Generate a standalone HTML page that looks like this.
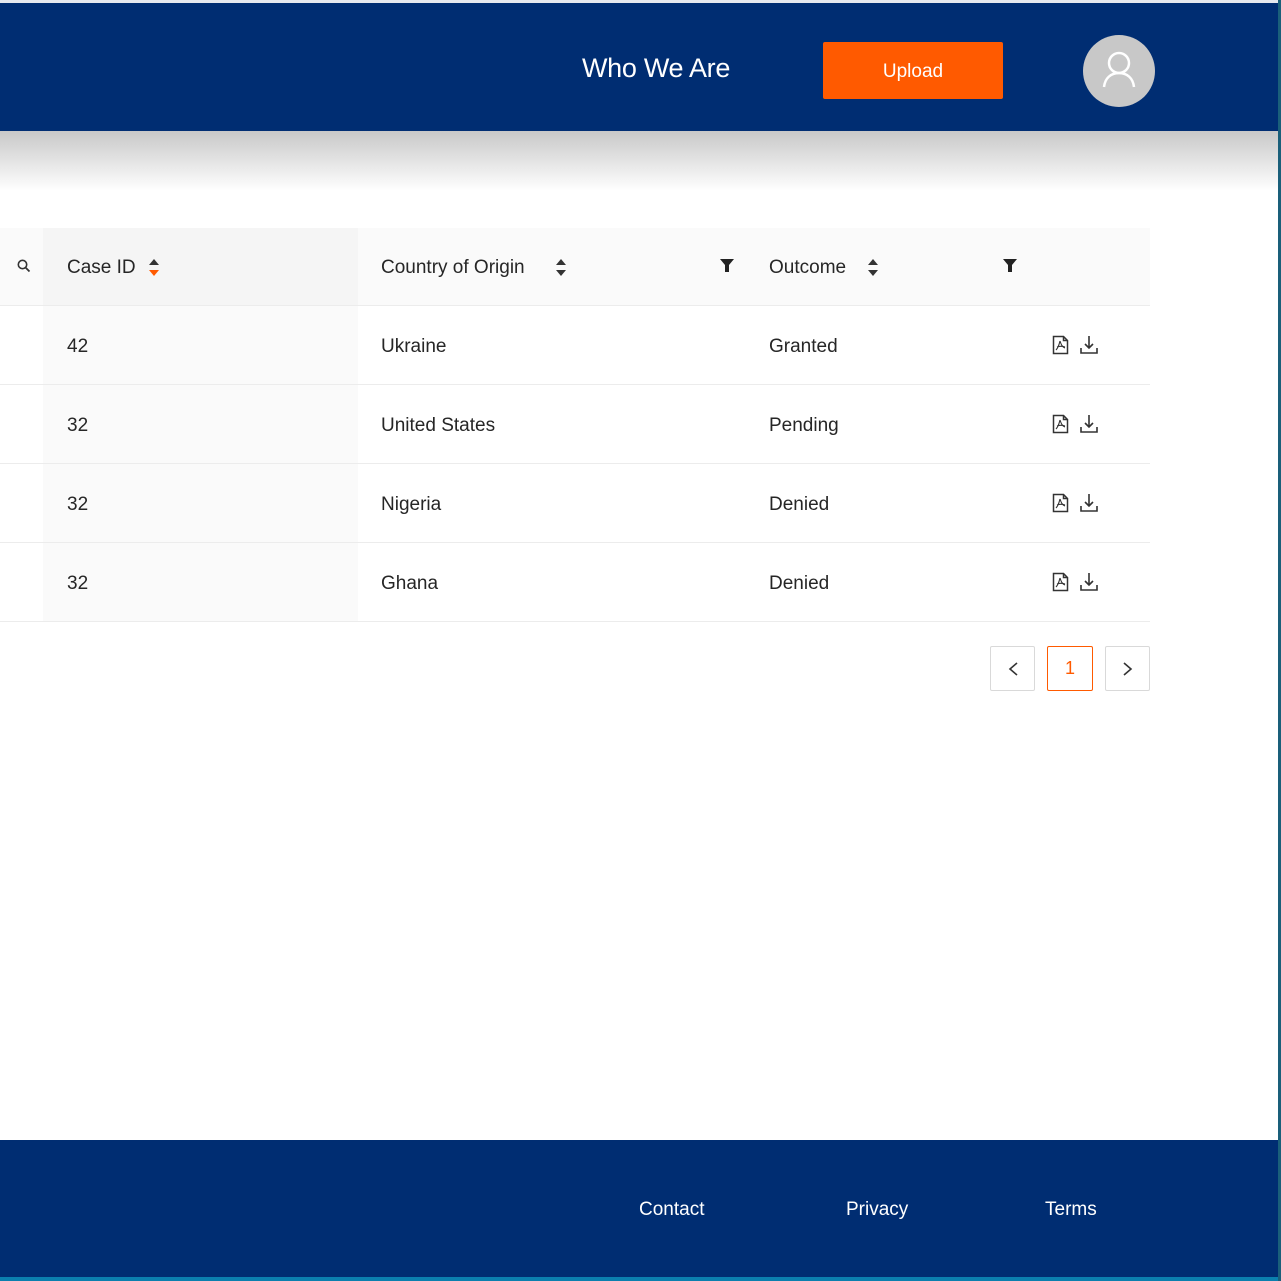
<!DOCTYPE html>
<html><head><meta charset="utf-8"><style>
*{margin:0;padding:0;box-sizing:border-box}
body{width:1281px;height:1281px;position:relative;overflow:hidden;background:#fff;font-family:"Liberation Sans",sans-serif;color:#262626}
.a{position:absolute}
.hdr{left:0;top:3px;width:1278px;height:128px;background:#002d72}
.shadow{left:0;top:131px;width:1278px;height:60px;background:linear-gradient(#c8c8c8,rgba(255,255,255,0))}
.t{font-size:19px;white-space:nowrap}
.hl{left:0;width:1150px;height:1px;background:#ececec}
</style></head><body>
<div class="a" style="left:0;top:0;width:1281px;height:3px;background:#e6e9ef"></div>
<div class="a hdr"></div>
<div class="a shadow"></div>
<div class="a" style="left:582px;top:53px;color:#fff;font-size:27px;letter-spacing:-0.3px">Who We Are</div>
<div class="a" style="left:823px;top:42px;width:180px;height:57px;background:#ff5a00;border-radius:2px;color:#fff;font-size:19px;text-align:center;line-height:59px">Upload</div>
<div class="a" style="left:1083px;top:35px;width:72px;height:72px;border-radius:50%;background:#c8c8c8">
<svg width="72" height="72" viewBox="0 0 72 72"><circle cx="36" cy="28" r="10" fill="none" stroke="#fff" stroke-width="2.5"/><path d="M21 52c1-9 7-14 15-14s14 5 15 14" fill="none" stroke="#fff" stroke-width="2.5"/></svg></div>

<div class="a" style="left:0;top:228px;width:1150px;height:78px;background:#fafafa"></div>
<div class="a" style="left:43px;top:228px;width:315px;height:394px;background:#f5f5f5"></div>
<div class="a" style="left:43px;top:306px;width:315px;height:316px;background:#fafafa"></div>
<div class="a hl" style="top:305px"></div>
<div class="a hl" style="top:384px"></div>
<div class="a hl" style="top:463px"></div>
<div class="a hl" style="top:542px"></div>
<div class="a hl" style="top:621px"></div>
<svg class="a" style="left:16px;top:258px" width="16" height="16" viewBox="0 0 16 16"><circle cx="6.5" cy="6.5" r="4.2" fill="none" stroke="#333" stroke-width="1.6"/><path d="M9.5 9.5l4 4" stroke="#333" stroke-width="1.8"/></svg>
<div class="a t" style="left:67px;top:257px">Case ID</div>
<svg class="a" style="left:147px;top:257px" width="14" height="22"><path d="M2 8l5-6 5 6z" fill="#333"/><path d="M2 13l5 6 5-6z" fill="#ff5a00"/></svg>
<div class="a t" style="left:381px;top:257px">Country of Origin</div>
<svg class="a" style="left:554px;top:257px" width="14" height="22"><path d="M2 8l5-6 5 6z" fill="#333"/><path d="M2 13l5 6 5-6z" fill="#333"/></svg>
<svg class="a" style="left:719px;top:258px" width="16" height="16"><path d="M1 1h14l-5 6v7h-4v-7z" fill="#222"/></svg>
<div class="a t" style="left:769px;top:257px">Outcome</div>
<svg class="a" style="left:866px;top:257px" width="14" height="22"><path d="M2 8l5-6 5 6z" fill="#333"/><path d="M2 13l5 6 5-6z" fill="#333"/></svg>
<svg class="a" style="left:1002px;top:258px" width="16" height="16"><path d="M1 1h14l-5 6v7h-4v-7z" fill="#222"/></svg>

<div class="a t" style="left:67px;top:336px">42</div><div class="a t" style="left:381px;top:336px">Ukraine</div><div class="a t" style="left:769px;top:336px">Granted</div>
<div class="a t" style="left:67px;top:415px">32</div><div class="a t" style="left:381px;top:415px">United States</div><div class="a t" style="left:769px;top:415px">Pending</div>
<div class="a t" style="left:67px;top:494px">32</div><div class="a t" style="left:381px;top:494px">Nigeria</div><div class="a t" style="left:769px;top:494px">Denied</div>
<div class="a t" style="left:67px;top:573px">32</div><div class="a t" style="left:381px;top:573px">Ghana</div><div class="a t" style="left:769px;top:573px">Denied</div>

<svg width="0" height="0" style="position:absolute"><defs>
<g id="ic"><path d="M1.5 1.5h10l4 4v13h-14z M11.5 1.5v4h4" fill="none" stroke="#333" stroke-width="1.5"/><path d="M8 6c1 3 2 6 5 7M8 6c-1 4-2 7-4 9M5 12c3-1 5-1 8 0" fill="none" stroke="#333" stroke-width="1.1"/>
<path d="M37 1v12M33 9l4 4 4-4M29 13v5h16v-5" fill="none" stroke="#333" stroke-width="1.6"/></g></defs></svg>
<svg class="a" style="left:1052px;top:335px" width="50" height="22"><use href="#ic"/></svg>
<svg class="a" style="left:1052px;top:414px" width="50" height="22"><use href="#ic"/></svg>
<svg class="a" style="left:1052px;top:493px" width="50" height="22"><use href="#ic"/></svg>
<svg class="a" style="left:1052px;top:572px" width="50" height="22"><use href="#ic"/></svg>

<div class="a" style="left:990px;top:646px;width:45px;height:45px;border:1px solid #d9d9d9;border-radius:2px"><svg width="43" height="43"><path d="M26 16l-7 6 7 6" fill="none" stroke="#333" stroke-width="1.6"/></svg></div>
<div class="a" style="left:1047px;top:646px;width:46px;height:45px;border:1px solid #ff5a00;border-radius:2px;color:#ff5a00;text-align:center;line-height:43px;font-size:18px">1</div>
<div class="a" style="left:1105px;top:646px;width:45px;height:45px;border:1px solid #d9d9d9;border-radius:2px"><svg width="43" height="43"><path d="M18 16l7 6-7 6" fill="none" stroke="#333" stroke-width="1.6"/></svg></div>

<div class="a" style="left:0;top:1140px;width:1278px;height:138px;background:#002d72"></div>
<div class="a" style="left:639px;top:1199px;color:#fff;font-size:19px">Contact</div>
<div class="a" style="left:846px;top:1199px;color:#fff;font-size:19px">Privacy</div>
<div class="a" style="left:1045px;top:1199px;color:#fff;font-size:19px">Terms</div>
<div class="a" style="left:0;top:1277px;width:1281px;height:4px;background:#0b7fae"></div>
<div class="a" style="left:1278px;top:0;width:3px;height:1281px;background:#1a5f7a"></div>
</body></html>
